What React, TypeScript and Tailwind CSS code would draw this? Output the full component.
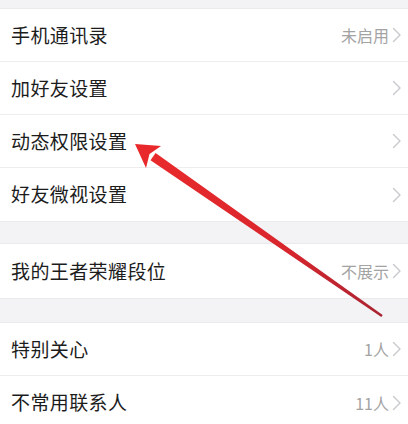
import React from "react";

const Chevron = () => (
  <svg width="10" height="16" viewBox="0 0 10 16" className="ml-[3px] shrink-0">
    <path d="M1.5 1.5 L8 8 L1.5 14.5" fill="none" stroke="#c9c9cd" strokeWidth="1.4" strokeLinecap="round" strokeLinejoin="round" />
  </svg>
);

type RowProps = { label: string; value?: string; last?: boolean; h?: string };

const Row = ({ label, value, last, h = "h-[53px]" }: RowProps) => (
  <div className={`flex items-center justify-between bg-white pl-[11px] pr-[6px] ${h} ${last ? "" : "border-b border-[#ededed]"}`}>
    <span className="text-[19px] text-[#1c1c1c] tracking-[0.4px]">{label}</span>
    <div className="flex items-center">
      {value && <span className="text-[16px] text-[#a3a3a3]">{value}</span>}
      <Chevron />
    </div>
  </div>
);

export default function App() {
  return (
    <div
      className="relative w-[408px] h-[424px] overflow-hidden bg-[#f3f3f5]"
      style={{ fontFamily: '"Noto Sans CJK SC", "Noto Sans", sans-serif' }}
    >
      <div className="h-[9px] bg-[#f3f3f5] border-b border-[#eaeaec]" />
      <div className="flex flex-col">
        <Row label="手机通讯录" value="未启用" />
        <Row label="加好友设置" />
        <Row label="动态权限设置" />
        <Row label="好友微视设置" last />
      </div>
      <div className="h-[23px] border-y border-[#eaeaec]" />
      <Row label="我的王者荣耀段位" value="不展示" last h="h-[54px]" />
      <div className="h-[25px] border-y border-[#eaeaec]" />
      <div className="flex flex-col">
        <Row label="特别关心" value="1人" />
        <Row label="不常用联系人" value="11人" last />
      </div>

      <svg className="absolute left-0 top-0 pointer-events-none" width="408" height="424" viewBox="0 0 408 424">
        <defs>
          <linearGradient id="ag" gradientUnits="userSpaceOnUse" x1="135" y1="144" x2="382" y2="316">
            <stop offset="0" stopColor="#ea2a2c" />
            <stop offset="0.6" stopColor="#d9262d" />
            <stop offset="1" stopColor="#a82432" />
          </linearGradient>
        </defs>
        <polygon points="150.5,160.3 155.6,152.9 382.7,315.0 381.3,317.0" fill="url(#ag)" />
        <polygon points="135,144 161,146 149.5,154 146,168" fill="#e8282b" />
      </svg>
    </div>
  );
}
